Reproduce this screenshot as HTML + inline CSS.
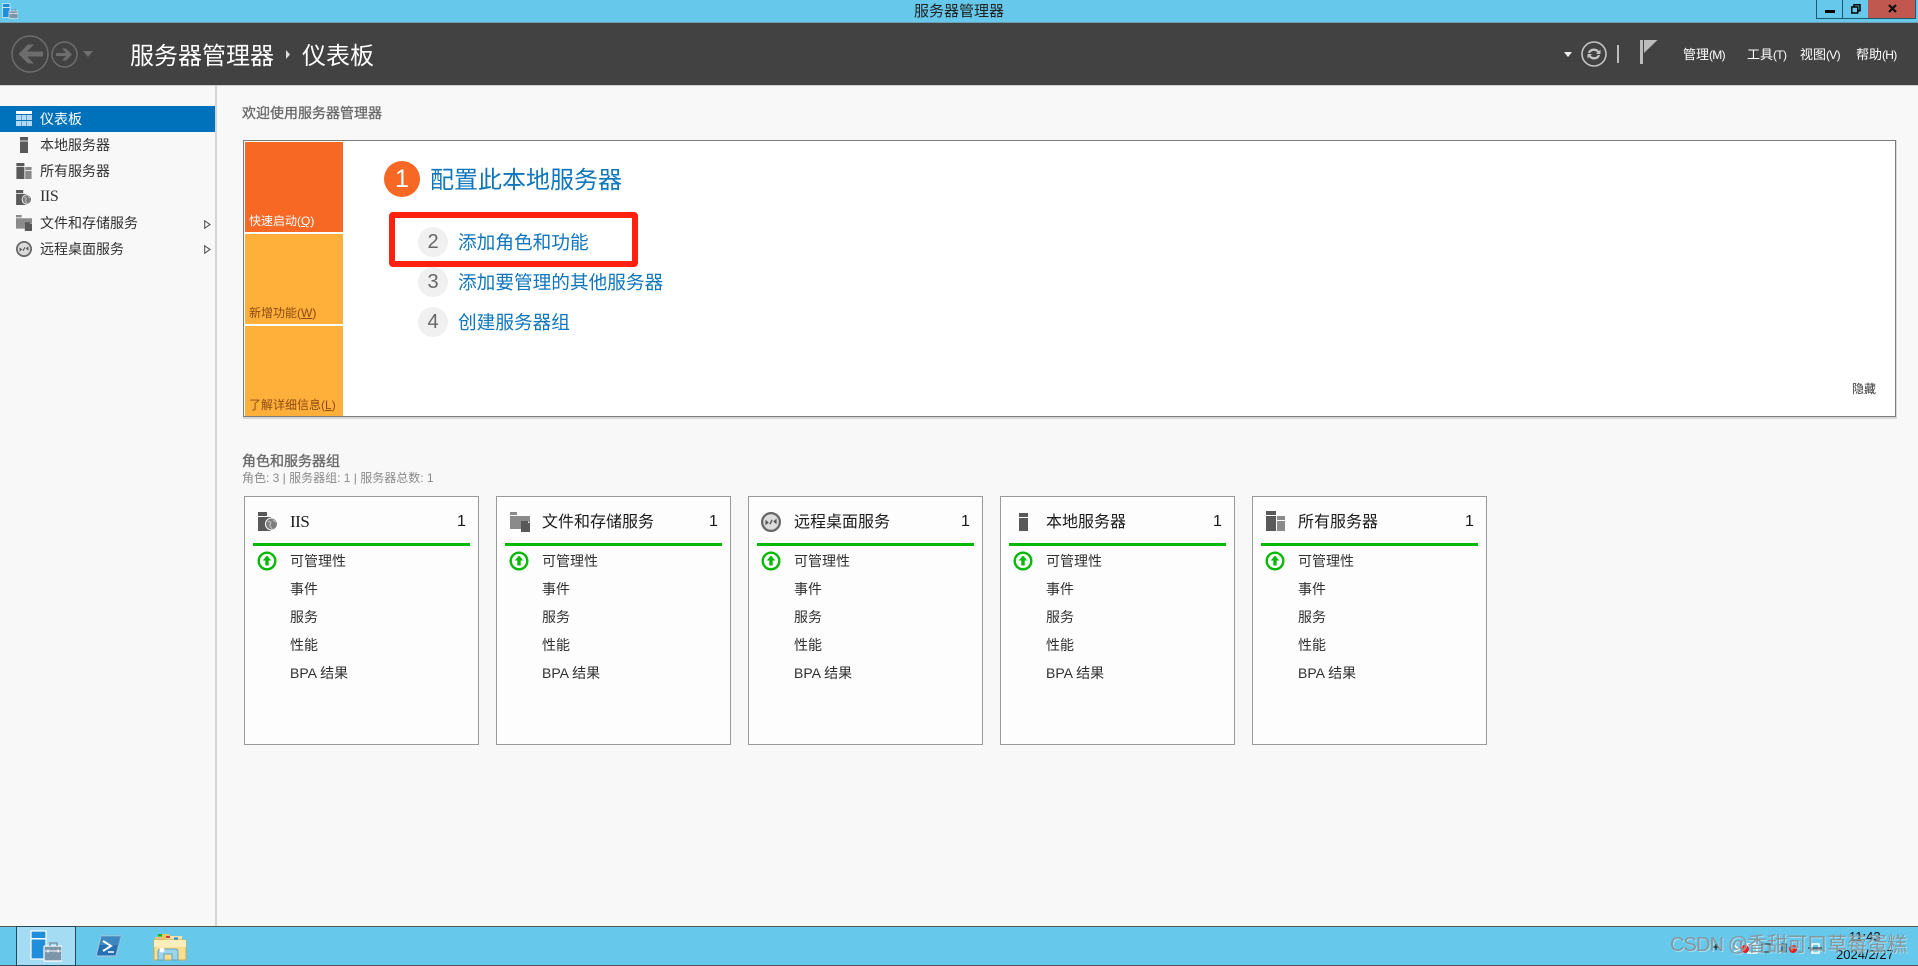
<!DOCTYPE html>
<html lang="zh-CN">
<head>
<meta charset="utf-8">
<title>服务器管理器</title>
<style>
html,body{margin:0;padding:0;width:1918px;height:966px;overflow:hidden;background:#f8f8f8}
body{position:relative;font-family:"Liberation Sans","Noto Sans CJK SC",sans-serif;color:#333}
.a{position:absolute;display:block}
.t{position:absolute;white-space:nowrap;line-height:20px;height:20px}
svg{position:absolute;display:block;overflow:visible}
.card{position:absolute;top:496px;width:233px;height:247px;border:1px solid #999;background:#fdfdfd}
.card .t{font-size:14px;color:#303030}
.card .h{font-size:16px;color:#1a1a1a;left:45px;top:16px}
.card .n{font-size:16px;color:#1a1a1a;left:212px;top:15px}
.card .l{position:absolute;left:8px;top:46px;width:217px;height:3px;background:#06b906}
.card svg.g{left:12px;top:54px}
.side{font-size:14px;color:#303030;left:40px}
.link{font-size:18.67px;color:#0f76bd;left:458px}
.num{position:absolute;left:418px;width:30px;height:30px;border-radius:50%;background:#f0f0f0;color:#666;font-size:20px;line-height:31px;text-align:center}
.tile{position:absolute;left:245px;width:98px}
.menu{font-size:13px;color:#fff;top:45px}
.menu span{font-size:12px;letter-spacing:-.7px}
</style>
</head>
<body>
<svg width="0" height="0" style="position:absolute">
<defs>
<symbol id="local" viewBox="0 0 9 18"><rect width="9" height="4" fill="#595959"/><rect y="5" width="9" height="13" fill="#595959"/></symbol>
<symbol id="all" viewBox="0 0 19 20"><rect width="10" height="4" fill="#595959"/><rect y="5" width="10" height="15" fill="#595959"/><rect x="11" y="5" width="8" height="4" fill="#8a8a8a"/><rect x="11" y="10" width="8" height="10" fill="#8a8a8a"/></symbol>
<symbol id="iis" viewBox="0 0 20 19"><rect width="9" height="4" fill="#595959"/><rect y="5" width="13" height="14" fill="#595959"/><circle cx="13.5" cy="12" r="6.5" fill="#fff"/><circle cx="13.5" cy="12" r="5.5" fill="#7d7d7d"/><path d="M10 10c2-1 3 0 3 1s-2 1-1 3 2 2 2 3M15 7.500c0 2 3 1 3 3" stroke="#c4c4c4" stroke-width="1" fill="none"/></symbol>
<symbol id="file" viewBox="0 0 20 20"><rect width="7" height="3" fill="#8a8a8a"/><path d="M0 4h20v7h-9v6H0z" fill="#8a8a8a"/><path d="M11 9h7l2 2v9h-9z" fill="#595959"/><path d="M18 9v2h2" fill="#ddd"/></symbol>
<symbol id="rds" viewBox="0 0 18 18"><circle cx="9" cy="9" r="8" fill="#dcdcdc" stroke="#666" stroke-width="2"/><path d="M4 7l3 2.500-3 2.500zM14 6l-3 2.500 3 2.500z" fill="#555"/><path d="M8 11l2-4" stroke="#555" stroke-width="1.200"/></symbol>
<symbol id="up" viewBox="0 0 20 20"><circle cx="10" cy="10" r="8.300" fill="#fff" stroke="#06b906" stroke-width="2.400"/><path d="M10 4.500l4.300 5h-2.600v5h-3.400v-5H5.700z" fill="#06b906"/></symbol>
<symbol id="sm" viewBox="0 0 32 32"><rect x="1" y="1" width="15" height="28" fill="#1f8fdc" stroke="#fff" stroke-width="1.200"/><rect x="1" y="8" width="15" height="1.500" fill="#fff"/><rect x="14" y="16" width="18" height="15" rx="1" fill="#7b96a8" stroke="#fff" stroke-width="1.200"/><path d="M20 16v-3h7v3" fill="none" stroke="#7b96a8" stroke-width="1.500"/><path d="M15 21h16M18 19.500v3M28 19.500v3" stroke="#fff" stroke-width="1.100"/></symbol>
</defs>
</svg>

<!-- title bar -->
<div class="a" style="left:0;top:0;width:1918px;height:23px;background:#66c9eb;border-bottom:0"></div>
<svg style="left:2px;top:3px" width="16" height="16"><use href="#sm" width="16" height="16"/></svg>
<div class="t" style="left:914px;top:2px;font-size:15px;color:#222">服务器管理器</div>
<div class="a" style="left:1816px;top:0;width:27px;height:19px;background:#66c9eb;border:1px solid #1c5a72;border-top:0;box-sizing:border-box"></div>
<div class="a" style="left:1825px;top:10px;width:10px;height:3px;background:#000"></div>
<div class="a" style="left:1842px;top:0;width:27px;height:19px;background:#66c9eb;border:1px solid #1c5a72;border-top:0;box-sizing:border-box"></div>
<svg style="left:1851px;top:4px" width="10" height="10"><rect x="3" y=".75" width="6" height="6" fill="none" stroke="#000" stroke-width="1.500"/><rect x=".75" y="3" width="6" height="6" fill="#66c9eb" stroke="#000" stroke-width="1.500"/></svg>
<div class="a" style="left:1868px;top:0;width:48px;height:19px;background:#c0584f;border:1px solid #1c5a72;border-top:0;border-left:0;box-sizing:border-box"></div>
<svg style="left:1888px;top:4px" width="9" height="9"><path d="M1 1l7 7M8 1l-7 7" stroke="#111" stroke-width="2.200"/></svg>

<!-- header -->
<div class="a" style="left:0;top:22px;width:1918px;height:1px;background:#6f9fb3"></div>
<div class="a" style="left:0;top:23px;width:1918px;height:62px;background:#424242"></div>
<div class="a" style="left:0;top:85px;width:1918px;height:1px;background:#d0d0d0"></div>
<svg style="left:11px;top:35px" width="38" height="38"><circle cx="19" cy="19" r="18" fill="none" stroke="#6d6d6d" stroke-width="1.500"/><path d="M32 16.500H16l7-7h-6l-9.500 9.500 9.500 9.500h6l-7-7h16z" fill="#6d6d6d"/></svg>
<svg style="left:51px;top:41px" width="27" height="27"><circle cx="13.500" cy="13.500" r="12.500" fill="none" stroke="#6d6d6d" stroke-width="1.500"/><path d="M5 12h10l-4-4.500h4l6 6-6 6h-4l4-4.500H5z" fill="#6d6d6d"/></svg>
<svg style="left:83px;top:51px" width="10" height="6"><path d="M0 0h10L5 6z" fill="#6d6d6d"/></svg>
<div class="t" style="left:130px;top:41px;font-size:24px;line-height:32px;height:32px;color:#fff">服务器管理器</div>
<svg style="left:285px;top:50px" width="6" height="9"><path d="M1 0l4 4.500L1 9z" fill="#ddd"/></svg>
<div class="t" style="left:302px;top:41px;font-size:24px;line-height:32px;height:32px;color:#fff">仪表板</div>

<svg style="left:1564px;top:52px" width="8" height="5"><path d="M0 0h8L4 5z" fill="#eee"/></svg>
<svg style="left:1581px;top:41px" width="26" height="26"><circle cx="13" cy="13" r="12" fill="none" stroke="#c4c4c4" stroke-width="1.600"/><path d="M7 12c1-5 8-6 11-2l1.500-1.500V13h-4.500l1.500-1.500c-2-2.500-6-2-7.500.5zM19 14c-1 5-8 6-11 2l-1.500 1.500V13H11l-1.500 1.500c2 2.500 6 2 7.500-.5z" fill="#c4c4c4"/></svg>
<div class="a" style="left:1617px;top:45px;width:2px;height:18px;background:#bcbcbc"></div>
<svg style="left:1640px;top:40px" width="18" height="24"><rect width="3" height="24" fill="#bcbcbc"/><path d="M4 0h13.500L4 13z" fill="#bcbcbc"/></svg>
<div class="t menu" style="left:1683px">管理<span>(M)</span></div>
<div class="t menu" style="left:1747px">工具<span>(T)</span></div>
<div class="t menu" style="left:1800px">视图<span>(V)</span></div>
<div class="t menu" style="left:1856px">帮助<span>(H)</span></div>

<!-- sidebar -->
<div class="a" style="left:215px;top:86px;width:2px;height:840px;background:#d4d4d4"></div>
<div class="a" style="left:0;top:106px;width:215px;height:26px;background:#0072bc"></div>
<svg style="left:16px;top:111px" width="16" height="15"><rect width="16" height="3" fill="#fff"/><g fill="#b5d9f0"><rect y="4" width="5" height="5"/><rect x="5.500" y="4" width="5" height="5"/><rect x="11" y="4" width="5" height="5"/><rect y="10" width="5" height="5"/><rect x="5.500" y="10" width="5" height="5"/><rect x="11" y="10" width="5" height="5"/></g></svg>
<div class="t side" style="top:109px;color:#fff">仪表板</div>
<svg style="left:20px;top:137px" width="8" height="16"><use href="#local" width="8" height="16"/></svg>
<div class="t side" style="top:135px">本地服务器</div>
<svg style="left:16px;top:163px" width="16" height="16"><use href="#all" width="16" height="16"/></svg>
<div class="t side" style="top:161px">所有服务器</div>
<svg style="left:16px;top:190px" width="16" height="15"><use href="#iis" width="16" height="15"/></svg>
<div class="t side" style="top:187px;font-family:'Liberation Serif',serif;font-size:16px;letter-spacing:-.4px">IIS</div>
<svg style="left:16px;top:215px" width="16" height="16"><use href="#file" width="16" height="16"/></svg>
<div class="t side" style="top:213px">文件和存储服务</div>
<svg style="left:204px;top:220px" width="7" height="9"><path d="M.7.8l5.300 3.700L.7 8.200z" fill="#fff" stroke="#555" stroke-width="1.100"/></svg>
<svg style="left:16px;top:241px" width="16" height="16"><use href="#rds" width="16" height="16"/></svg>
<div class="t side" style="top:239px">远程桌面服务</div>
<svg style="left:204px;top:245px" width="7" height="9"><path d="M.7.8l5.300 3.700L.7 8.200z" fill="#fff" stroke="#555" stroke-width="1.100"/></svg>

<!-- welcome -->
<div class="t" style="left:242px;top:103px;font-size:14px;color:#6a6a6a;-webkit-text-stroke:.35px #6a6a6a">欢迎使用服务器管理器</div>
<div class="a" style="left:243px;top:140px;width:1654px;height:279px;background:#d8d8d8"></div>
<div class="a" style="left:243px;top:140px;width:1651px;height:275px;border:1px solid #7c7c7c;background:#fff;box-shadow:inset 0 0 0 1px #fff"></div>
<div class="tile" style="top:142px;height:90px;background:#f66823"></div>
<div class="tile" style="top:234px;height:90px;background:#ffb03b"></div>
<div class="tile" style="top:326px;height:90px;background:#ffb03b"></div>
<div class="t" style="left:249px;top:211px;font-size:12px;color:#fff">快速启动(<u>Q</u>)</div>
<div class="t" style="left:249px;top:303px;font-size:12px;color:#8c4a12">新增功能(<u>W</u>)</div>
<div class="t" style="left:249px;top:395px;font-size:12px;color:#8c4a12">了解详细信息(<u>L</u>)</div>

<div class="a" style="left:384px;top:161px;width:36px;height:36px;border-radius:50%;background:#f66823;color:#fff;font-size:25px;line-height:37px;text-align:center">1</div>
<div class="t" style="left:430px;top:165px;font-size:24px;line-height:32px;height:32px;color:#0f76bd">配置此本地服务器</div>

<div class="a" style="left:389px;top:212px;width:237px;height:43px;border:6px solid #ff2010;border-radius:4px"></div>
<div class="num" style="top:227px">2</div>
<div class="t link" style="top:233px">添加角色和功能</div>
<div class="num" style="top:267px">3</div>
<div class="t link" style="top:273px">添加要管理的其他服务器</div>
<div class="num" style="top:307px">4</div>
<div class="t link" style="top:313px">创建服务器组</div>
<div class="t" style="left:1852px;top:379px;font-size:12px;color:#333">隐藏</div>

<!-- roles -->
<div class="t" style="left:242px;top:451px;font-size:14px;color:#6a6a6a;-webkit-text-stroke:.35px #6a6a6a">角色和服务器组</div>
<div class="t" style="left:242px;top:468px;font-size:12px;color:#8a8a8a">角色: 3 | 服务器组: 1 | 服务器总数: 1</div>

<div class="card" style="left:244px">
<svg style="left:13px;top:15px" width="20" height="19"><use href="#iis" width="20" height="19"/></svg>
<div class="t h" style="font-family:'Liberation Serif',serif;font-size:17px;top:15px;letter-spacing:-.5px">IIS</div><div class="t n">1</div><div class="l"></div>
<svg class="g" width="20" height="20"><use href="#up" width="20" height="20"/></svg>
<div class="t" style="left:45px;top:54px">可管理性</div><div class="t" style="left:45px;top:82px">事件</div><div class="t" style="left:45px;top:110px">服务</div><div class="t" style="left:45px;top:138px">性能</div><div class="t" style="left:45px;top:166px">BPA 结果</div>
</div>
<div class="card" style="left:496px">
<svg style="left:13px;top:15px" width="20" height="20"><use href="#file" width="20" height="20"/></svg>
<div class="t h">文件和存储服务</div><div class="t n">1</div><div class="l"></div>
<svg class="g" width="20" height="20"><use href="#up" width="20" height="20"/></svg>
<div class="t" style="left:45px;top:54px">可管理性</div><div class="t" style="left:45px;top:82px">事件</div><div class="t" style="left:45px;top:110px">服务</div><div class="t" style="left:45px;top:138px">性能</div><div class="t" style="left:45px;top:166px">BPA 结果</div>
</div>
<div class="card" style="left:748px">
<svg style="left:12px;top:15px" width="20" height="20"><use href="#rds" width="20" height="20"/></svg>
<div class="t h">远程桌面服务</div><div class="t n">1</div><div class="l"></div>
<svg class="g" width="20" height="20"><use href="#up" width="20" height="20"/></svg>
<div class="t" style="left:45px;top:54px">可管理性</div><div class="t" style="left:45px;top:82px">事件</div><div class="t" style="left:45px;top:110px">服务</div><div class="t" style="left:45px;top:138px">性能</div><div class="t" style="left:45px;top:166px">BPA 结果</div>
</div>
<div class="card" style="left:1000px">
<svg style="left:18px;top:16px" width="9" height="18"><use href="#local" width="9" height="18"/></svg>
<div class="t h">本地服务器</div><div class="t n">1</div><div class="l"></div>
<svg class="g" width="20" height="20"><use href="#up" width="20" height="20"/></svg>
<div class="t" style="left:45px;top:54px">可管理性</div><div class="t" style="left:45px;top:82px">事件</div><div class="t" style="left:45px;top:110px">服务</div><div class="t" style="left:45px;top:138px">性能</div><div class="t" style="left:45px;top:166px">BPA 结果</div>
</div>
<div class="card" style="left:1252px">
<svg style="left:13px;top:14px" width="19" height="20"><use href="#all" width="19" height="20"/></svg>
<div class="t h">所有服务器</div><div class="t n">1</div><div class="l"></div>
<svg class="g" width="20" height="20"><use href="#up" width="20" height="20"/></svg>
<div class="t" style="left:45px;top:54px">可管理性</div><div class="t" style="left:45px;top:82px">事件</div><div class="t" style="left:45px;top:110px">服务</div><div class="t" style="left:45px;top:138px">性能</div><div class="t" style="left:45px;top:166px">BPA 结果</div>
</div>

<!-- taskbar -->
<div class="a" style="left:0;top:926px;width:1918px;height:40px;background:#66c9eb"></div>
<div class="a" style="left:0;top:926px;width:1918px;height:1px;background:#555"></div>
<div class="a" style="left:0;top:965px;width:1918px;height:1px;background:#555"></div>
<div class="a" style="left:16px;top:926px;width:60px;height:40px;box-sizing:border-box;background:#a4dcf3;border:1px solid #24495a"></div>
<svg style="left:30px;top:930px" width="32" height="32"><use href="#sm" width="32" height="32"/></svg>
<svg style="left:95px;top:935px" width="27" height="22"><path d="M6 1h20l-5 20H1z" fill="#2470b0" stroke="#9fc4dc" stroke-width="1.200"/><path d="M6 1h20l-2 9H5z" fill="#4f97cc" opacity=".6"/><path d="M8 6l8 5-8 5" fill="none" stroke="#fff" stroke-width="2"/><path d="M13 17h6" stroke="#fff" stroke-width="1.500"/></svg>
<svg style="left:154px;top:933px" width="32" height="28"><path d="M1 4h14v4H1z" fill="#e9c878"/><rect x="4" y="1" width="12" height="5" fill="#e6c46e"/><rect x="4" y="1" width="4" height="2.500" fill="#1fb51f"/><rect x="12" y="3" width="16" height="5" fill="#f4e2a8"/><rect x="12" y="3" width="4" height="2" fill="#d63a2a"/><rect x="20" y="4.500" width="4" height="2" fill="#1f8fdc"/><rect x="0" y="7" width="32" height="20" fill="#f8df8e" stroke="#caa85c"/><rect x="0" y="7" width="32" height="7" fill="#fbeebb"/><path d="M4 27v-8c0-2 1-3 3-3h14c2 0 3 1 3 3v8h-6v-6H10v6z" fill="#9fd3ea" stroke="#5ea3c6"/><circle cx="8" cy="17" r="2.500" fill="#fff"/></svg>

<svg style="left:1712px;top:942px" width="120" height="14"><path d="M1 5h6M4 2v6" stroke="#222" stroke-width="1.200"/><path d="M22 3l5 4-5 3M36 2h9v9h-9z" fill="none" stroke="#fff" stroke-width="1.500"/><circle cx="33" cy="7" r="4" fill="#e02020"/><path d="M50 2h8v8h-8zM70 2h4v8h-4z" fill="none" stroke="#222"/><circle cx="81" cy="7" r="4" fill="#e02020"/><path d="M100 2h7v9h-7z" fill="none" stroke="#fff" stroke-width="1.500"/><path d="M96 6h14" stroke="#222"/></svg>
<div class="t" style="left:1849px;top:927px;font-size:13px;color:#111">11:43</div>
<div class="t" style="left:1836px;top:945px;font-size:13px;color:#111">2024/2/27</div>
<div class="t" style="left:1670px;top:933px;font-size:20px;line-height:24px;height:24px;color:#85979f;text-shadow:1px 1px 0 rgba(255,255,255,.4)"><span style="letter-spacing:-.9px">CSDN @</span>香甜可口草莓蛋糕</div>
</body>
</html>
